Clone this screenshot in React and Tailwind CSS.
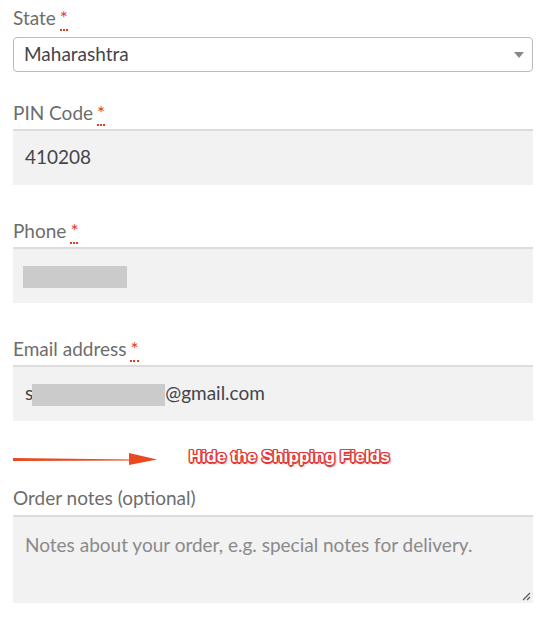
import React from 'react';

const Req = () => (
  <abbr className="text-[#e2401c] no-underline ml-[4px] border-b-2 border-dotted border-[#e2401c] leading-none" title="required">*</abbr>
);

const Label = ({ children, required }) => (
  <label className="block text-[19px] leading-[24px] text-[#6d6d6d]">
    {children}
    {required && <Req />}
  </label>
);

const Blur = ({ w }) => <span className="inline-block h-[22px] bg-[#cbcbcb] align-middle" style={{ width: w }} />;

const Field = ({ label, required, children, className = '' }) => (
  <div className={className}>
    <Label required={required}>{label}</Label>
    <div className="mt-[4px] h-[56px] bg-[#f2f2f2] shadow-[inset_0_2px_0_#dcdcdc] flex items-center px-[12px] text-[19px] text-[#43454b]">
      {children}
    </div>
  </div>
);

const red = '#e23b3b';

export default function App() {
  return (
    <div className="bg-white w-[546px] h-[631px] px-[13px] pt-[6px] font-['Lato','Liberation_Sans',sans-serif]">
      <div>
        <Label required>State</Label>
        <div className="mt-[7px] h-[35px] border border-[#bbbbbb] rounded-[4px] flex items-center justify-between pl-[10px] pr-[8px] text-[19px] text-[#43454b]">
          <span>Maharashtra</span>
          <span className="w-0 h-0 border-l-[5px] border-r-[5px] border-t-[6px] border-l-transparent border-r-transparent border-t-[#888888]" />
        </div>
      </div>

      <Field className="mt-[29px]" label="PIN Code" required>410208</Field>

      <Field className="mt-[34px]" label="Phone" required>
        <span className="-ml-[2px]"><Blur w={104} /></span>
      </Field>

      <Field className="mt-[34px]" label="Email address" required>
        <span className="flex items-center">
          s<span className="-ml-[1px]"><Blur w={133} /></span>@gmail.com
        </span>
      </Field>

      <div className="h-[65px] flex items-start pt-[28px]">
        <svg width="146" height="14" viewBox="0 0 146 14" className="mt-[3px] shrink-0">
          <path d="M0 6 L118 7.5 L118 8.5 L0 9 Z" fill="#e8491d" />
          <path d="M116 1 L144 7.5 L116 13 Z" fill="#e8491d" />
        </svg>
        <span
          className="ml-[30px] -mt-[2px] text-[17px] leading-[20px] font-bold text-white font-['Liberation_Sans',sans-serif] tracking-[0.1px] whitespace-nowrap"
          style={{ textShadow: `1.5px 0 ${red}, -1.5px 0 ${red}, 0 1.5px ${red}, 0 -1.5px ${red}, 1px 1px ${red}, -1px -1px ${red}, 1px -1px ${red}, -1px 1px ${red}, 2px 2px 2px rgba(0,0,0,0.3)` }}
        >
          Hide the Shipping Fields
        </span>
      </div>

      <div>
        <Label>Order notes (optional)</Label>
        <div className="relative mt-[5px] h-[88px] bg-[#f2f2f2] shadow-[inset_0_2px_0_#dcdcdc] px-[12px] pt-[16px] text-[19px] text-[#8a8a8a]">
          Notes about your order, e.g. special notes for delivery.
          <svg width="10" height="10" viewBox="0 0 10 10" className="absolute right-[2px] bottom-[2px]">
            <path d="M9 2 L2 9 M9 6 L6 9" stroke="#555" strokeWidth="1.2" />
          </svg>
        </div>
      </div>
    </div>
  );
}
